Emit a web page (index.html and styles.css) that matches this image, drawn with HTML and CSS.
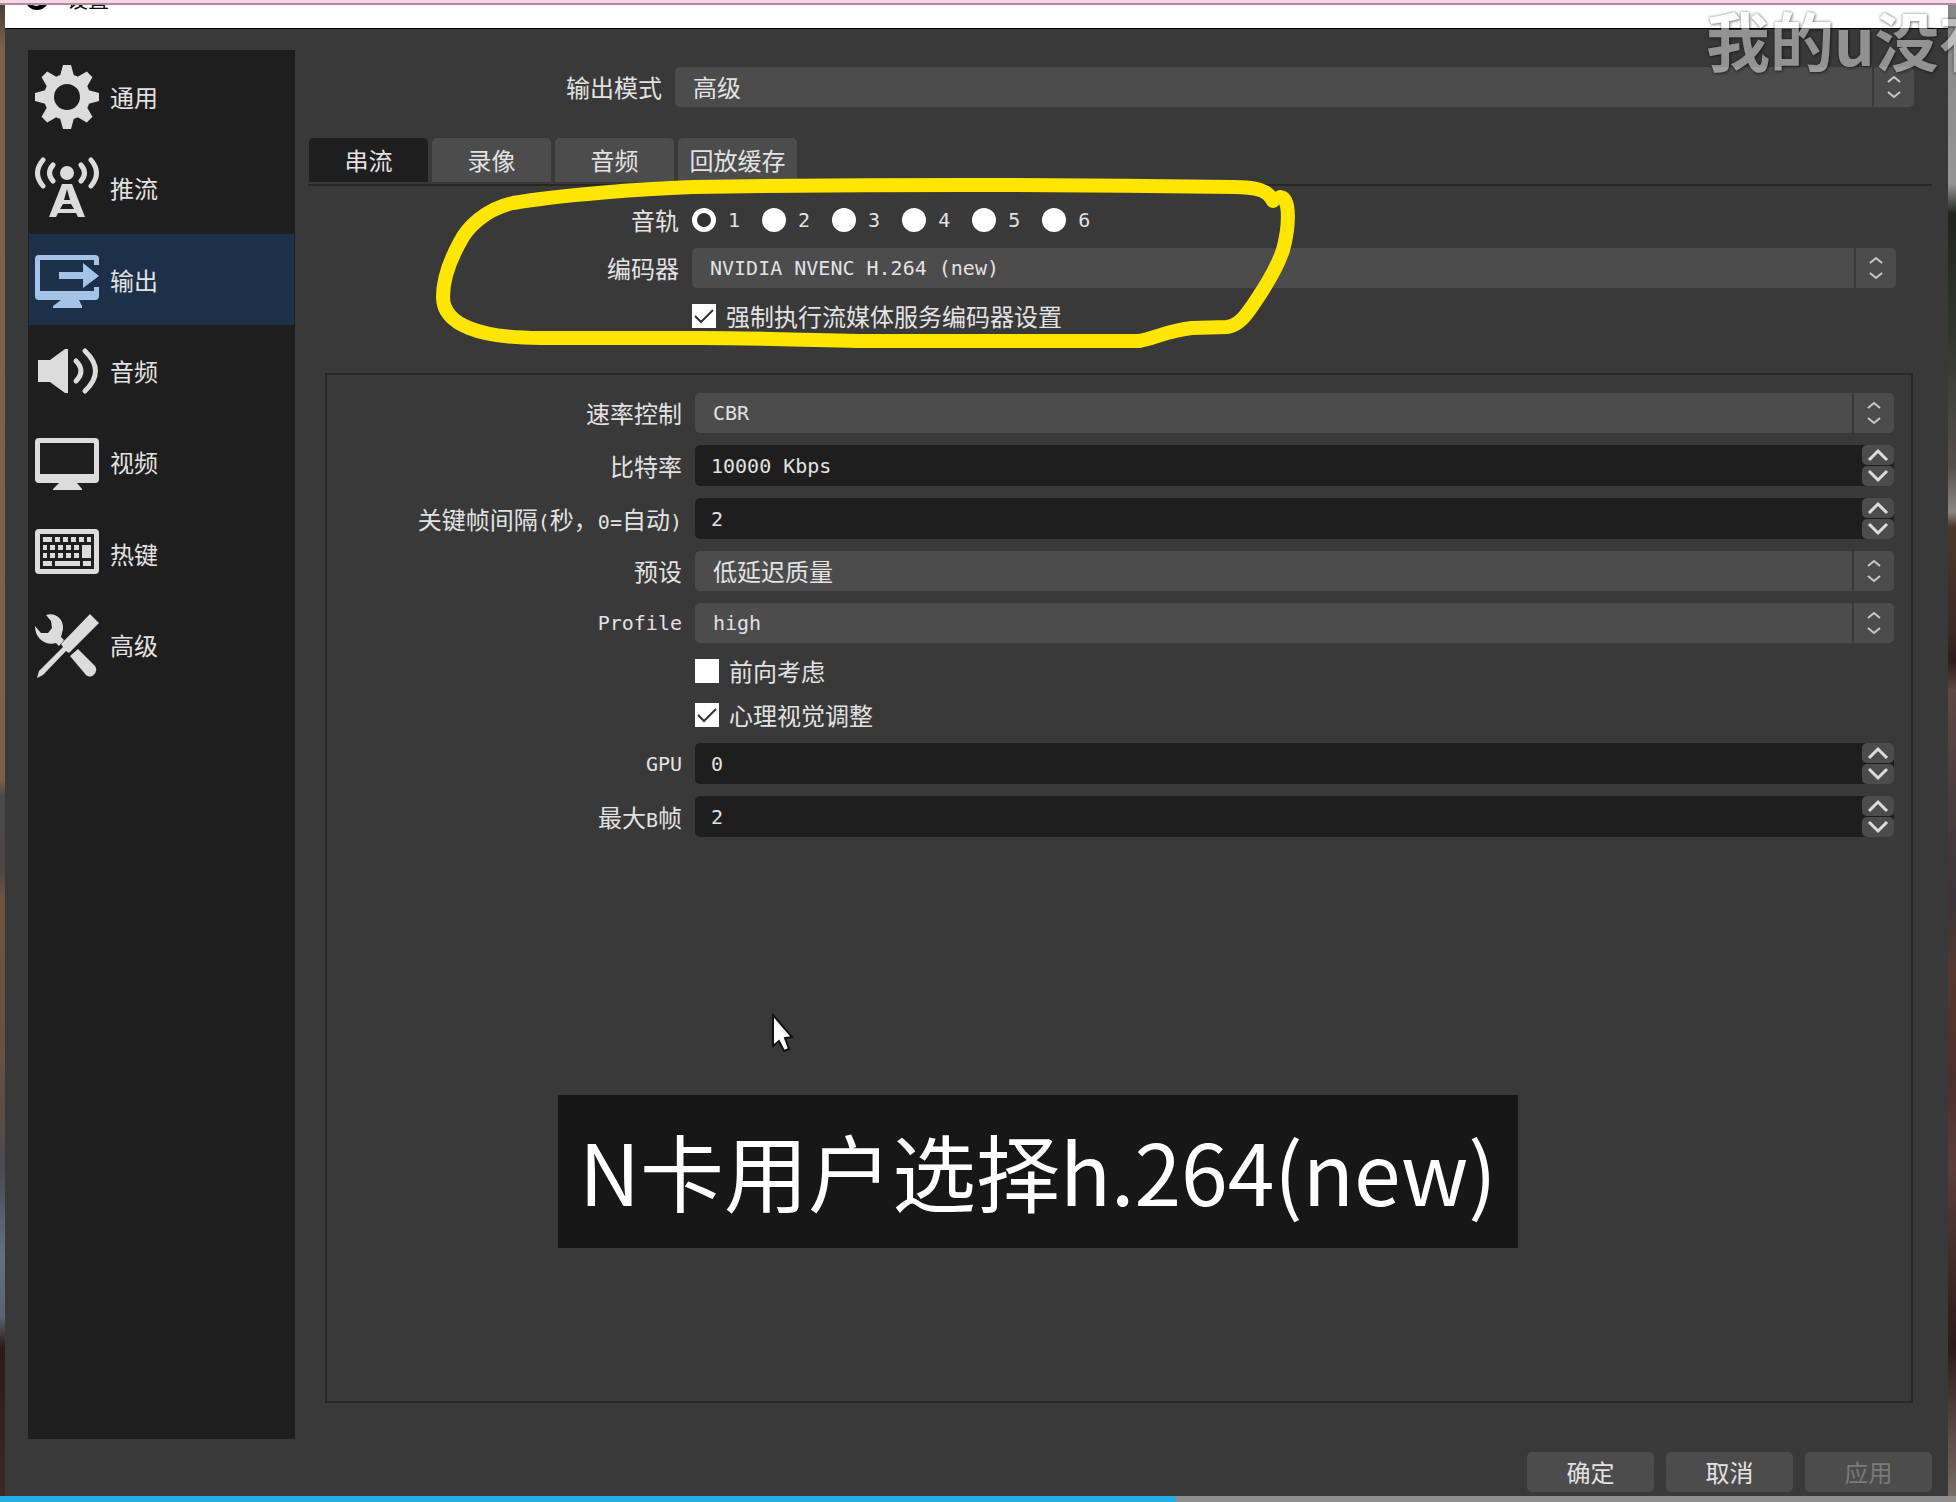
FILE: index.html
```html
<!DOCTYPE html>
<html lang="zh-CN">
<head>
<meta charset="utf-8">
<title>设置</title>
<link rel="stylesheet" href="styles.css">
</head>
<body>
<svg class="defs" aria-hidden="true">
  <symbol id="combo-arrows" viewBox="0 0 14 24"><path d="M1 7L7 2L13 7M1 17L7 22L13 17"/></symbol>
  <symbol id="up" viewBox="0 0 22 14"><path d="M2 12L11 3L20 12"/></symbol>
  <symbol id="down" viewBox="0 0 22 14"><path d="M2 2L11 11L20 2"/></symbol>
</svg>

<div class="top-strip"></div>
<div class="desktop">
  <div class="window">
    <header class="titlebar">
      <svg class="logo" viewBox="0 0 24 24"><circle cx="12" cy="12" r="12"/><path d="M7 17Q12 22 17 15" /></svg>
      <span class="title">设置</span>
      <svg class="close" viewBox="0 0 18 18"><path d="M1 1L17 17M17 1L1 17"/></svg>
    </header>

    <div class="content">
      <nav class="sidebar">
        <a href="#general" class="item">
          <svg viewBox="0 0 66 66"><g id="teeth"><path d="M29 1H37L40 12H26Z"/><path d="M29 1H37L40 12H26Z" transform="rotate(90 33 33)"/><path d="M29 1H37L40 12H26Z" transform="rotate(180 33 33)"/><path d="M29 1H37L40 12H26Z" transform="rotate(270 33 33)"/></g><use href="#teeth" transform="rotate(45 33 33)"/><circle class="gear-ring" cx="33" cy="33" r="18"/></svg>
          <span>通用</span></a>
        <a href="#stream" class="item">
          <svg viewBox="0 0 66 66"><circle cx="33" cy="18" r="7"/><path class="line" d="M9 5Q-2 18 9 31M19 10Q12 18 19 26M57 5Q68 18 57 31M47 10Q54 18 47 26"/><path fill-rule="evenodd" d="M28 29H38L51 62H44L42 58H24L22 62H15ZM33 34L30 45H36ZM29 49L26 54H40L37 49Z"/></svg>
          <span>推流</span></a>
        <a href="#output" class="item active" aria-current="page">
          <svg viewBox="0 0 66 66"><path d="M5 8H61Q65 8 65 12V18H60V13H6V44H60V40H65V49Q65 53 61 53H45L48 59V61H19V59L27 53H5Q1 53 1 49V12Q1 8 5 8Z"/><path d="M25 25H49V16L65 29L49 41V32H25Z"/></svg>
          <span>输出</span></a>
        <a href="#audio" class="item">
          <svg viewBox="0 0 66 66"><path d="M4 22H16L31 11H34V55H31L16 44H4Z"/><path class="line" d="M42 23Q52 33 42 43M51 13Q72 33 51 53"/></svg>
          <span>音频</span></a>
        <a href="#video" class="item">
          <svg viewBox="0 0 66 66"><path fill-rule="evenodd" d="M5 9H61Q65 9 65 13V50Q65 54 61 54H43L48 60V61H19V60L25 54H5Q1 54 1 50V13Q1 9 5 9ZM6 14V45H60V14Z"/></svg>
          <span>视频</span></a>
        <a href="#hotkeys" class="item">
          <svg viewBox="0 0 66 66"><path fill-rule="evenodd" d="M5 8H61Q65 8 65 12V49Q65 53 61 53H5Q1 53 1 49V12Q1 8 5 8ZM6 13V48H60V13Z"/><path d="M9 16h9v5h-9zM21 16h5v5h-5zM29 16h5v5h-5zM37 16h5v5h-5zM45 16h5v5h-5zM53 16h4v5h-4zM9 24h4v5h-4zM16 24h5v5h-5zM24 24h5v5h-5zM32 24h5v5h-5zM40 24h5v5h-5zM48 24h9v13h-9zM9 32h4v5h-4zM16 32h5v5h-5zM24 32h5v5h-5zM32 32h5v5h-5zM40 32h5v5h-5zM9 40h9v5h-9zM21 40h25v5h-25zM49 40h8v5h-8z"/></svg>
          <span>热键</span></a>
        <a href="#advanced" class="item">
          <svg viewBox="0 0 66 66"><path d="M12 3C20 0 30 6 29 17L27 25L30 28L25 34L22 31C12 34 1 27 1 14L7 21L14 21L18 16L17 9Z"/><path d="M36 44L44 37L61 54C65 59 58 68 52 63Z"/><path d="M56 2L65 11L35 41L32 39L9 63L3 66L5 59L29 35L27 32Z"/></svg>
          <span>高级</span></a>
      </nav>

      <main class="panel">
        <div class="form mode-form">
          <label for="mode">输出模式</label>
          <span class="combo"><select id="mode"><option>高级</option></select><svg><use href="#combo-arrows"/></svg></span>
        </div>

        <div class="tabs" role="tablist">
          <button type="button" role="tab" class="tab selected" aria-selected="true">串流</button>
          <button type="button" role="tab" class="tab">录像</button>
          <button type="button" role="tab" class="tab">音频</button>
          <button type="button" role="tab" class="tab">回放缓存</button>
        </div>

        <div class="form encoder-form">
          <span class="label" id="track-label">音轨</span>
          <div class="tracks latin" role="radiogroup" aria-labelledby="track-label">
            <label><input type="radio" name="track" checked>1</label>
            <label><input type="radio" name="track">2</label>
            <label><input type="radio" name="track">3</label>
            <label><input type="radio" name="track">4</label>
            <label><input type="radio" name="track">5</label>
            <label><input type="radio" name="track">6</label>
          </div>
          <label for="encoder">编码器</label>
          <span class="combo"><select id="encoder" class="latin"><option>NVIDIA NVENC H.264 (new)</option></select><svg><use href="#combo-arrows"/></svg></span>
          <label class="check"><input type="checkbox" checked>强制执行流媒体服务编码器设置</label>
        </div>

        <section class="group">
          <div class="form group-form">
            <label for="rate">速率控制</label>
            <span class="combo"><select id="rate" class="latin"><option>CBR</option></select><svg><use href="#combo-arrows"/></svg></span>

            <label for="bitrate">比特率</label>
            <span class="spin"><input id="bitrate" class="latin" type="text" value="10000 Kbps"><span class="steps"><button type="button" aria-label="+"><svg><use href="#up"/></svg></button><button type="button" aria-label="-"><svg><use href="#down"/></svg></button></span></span>

            <label for="keyint">关键帧间隔<span class="latin">(</span>秒&#xFF0C;<span class="latin">0=</span>自动<span class="latin">)</span></label>
            <span class="spin"><input id="keyint" class="latin" type="text" value="2"><span class="steps"><button type="button" aria-label="+"><svg><use href="#up"/></svg></button><button type="button" aria-label="-"><svg><use href="#down"/></svg></button></span></span>

            <label for="preset">预设</label>
            <span class="combo"><select id="preset"><option>低延迟质量</option></select><svg><use href="#combo-arrows"/></svg></span>

            <label for="profile" class="latin">Profile</label>
            <span class="combo"><select id="profile" class="latin"><option>high</option></select><svg><use href="#combo-arrows"/></svg></span>

            <label class="check"><input type="checkbox">前向考虑</label>
            <label class="check"><input type="checkbox" checked>心理视觉调整</label>

            <label for="gpu" class="latin">GPU</label>
            <span class="spin"><input id="gpu" class="latin" type="text" value="0"><span class="steps"><button type="button" aria-label="+"><svg><use href="#up"/></svg></button><button type="button" aria-label="-"><svg><use href="#down"/></svg></button></span></span>

            <label for="bframes">最大<span class="latin">B</span>帧</label>
            <span class="spin"><input id="bframes" class="latin" type="text" value="2"><span class="steps"><button type="button" aria-label="+"><svg><use href="#up"/></svg></button><button type="button" aria-label="-"><svg><use href="#down"/></svg></button></span></span>
          </div>
        </section>
      </main>
    </div>

    <footer class="actions">
      <button type="button">确定</button>
      <button type="button">取消</button>
      <button type="button" disabled>应用</button>
    </footer>
  </div>
</div>
<div class="progress"><div class="played" style="width:60.1%"></div></div>

<svg class="marker" viewBox="435 176 866 176"><path d="M1273 201C1268 190 1256 187 1233 187C1100 185 900 184 693 187C640 189 560 195 513 203C485 209 467 228 460 242C450 260 443 280 443 297C443 325 480 338 540 338H700C780 338 840 342 899 341H1139C1155 338 1170 330 1192 328L1227 327C1240 325 1246 315 1255 302C1270 280 1278 265 1283 250C1288 232 1292 198 1280 197"/></svg>
<svg class="cursor" viewBox="0 0 24 40"><path d="M2 2V33L8 28L13 38L18 36L14 25L21 24Z"/></svg>
<p class="caption">N卡用户选择h.264(new)</p>
<p class="danmaku">我的u没有</p>
</body>
</html>
```
FILE: styles.css
```css
* {
  box-sizing: border-box;
}

body {
  position: relative;
  display: flex;
  flex-direction: column;
  min-height: 100vh;
  margin: 0;
  overflow-x: hidden;
  background: #393939;
  color: #e2e2e2;
  font: 24px/24px "Noto Sans CJK SC", sans-serif;
}

button,
input,
select {
  margin: 0;
  border: 0;
  color: inherit;
  font: inherit;
}

p {
  margin: 0;
}

.defs {
  position: absolute;
  width: 0;
  height: 0;
}

.latin {
  font-family: "DejaVu Sans Mono", "Noto Sans CJK SC", monospace;
  font-size: 20px;
}

label > .latin {
  line-height: 0;
}

.top-strip {
  height: 5px;
  background: #fbd5e3;
  border-bottom: 2px solid #a8919b;
}

/* Strips of wallpaper show on both sides of the window */
.desktop {
  flex: 1;
  display: flex;
  padding: 0 8px 0 5px;
  background:
    linear-gradient(#4a3d38 0, #80624b 3%, #7d5f48 52%, #4b484c 53%, #4a4549 58%, #70543e 60%, #6a5140 70%, #4a4a50 78%, #667080 84%, #5b626c 88%, #271b1a 90%, #382a26 100%) left / 5px 100% no-repeat,
    linear-gradient(#858585 0, #969696 12%, #20241e 14%, #30362d 22%, #55504c 31%, #8b8784 34%, #4c3628 35%, #3a2a24 42%, #2a1d1c 44%, #604644 46%, #4c3e3f 52%, #3a3438 60%, #54382e 65%, #4a302a 72%, #5a3d38 78%, #2b1a19 90%, #786c66 100%) right / 8px 100% no-repeat;
}

.window {
  flex: 1;
  display: flex;
  flex-direction: column;
  background: #393939;
}

.titlebar {
  display: flex;
  align-items: flex-end;
  height: 24px;
  padding: 0 16px 18px 20px;
  overflow: hidden;
  background: #fff;
  border-bottom: 1px solid #000;
  color: #111;
  font-size: 21px;
  line-height: 24px;
}

.logo {
  flex: none;
  width: 24px;
  height: 24px;
  margin-right: 18px;
}

.logo path {
  fill: none;
  stroke: #ddd;
  stroke-width: 2;
}

.close {
  width: 18px;
  height: 18px;
  margin: 0 0 4px auto;
  fill: none;
  stroke: #876;
}

.content {
  flex: 1;
  display: grid;
  grid-template-columns: 267px 1fr;
  gap: 13px;
  padding: 21px 16px 0 23px;
}

.sidebar {
  display: grid;
  grid-template-rows: 91px 92px 91px 91px 92px 91px 91px;
  align-content: start;
  padding: 1px;
  background: #1e1e1e;
}

.item {
  display: flex;
  align-items: center;
  gap: 10px;
  padding-left: 5px;
  color: inherit;
  text-decoration: none;
}

.item svg {
  width: 66px;
  height: 66px;
  fill: #dcdcdc;
}

.item .line {
  fill: none;
  stroke: #dcdcdc;
  stroke-width: 5;
  stroke-linecap: round;
}

.item .gear-ring {
  fill: none;
  stroke: #dcdcdc;
  stroke-width: 10;
}

.active {
  background: #1c3049;
}

.active svg {
  fill: #a5c3e6;
}

.panel {
  display: flex;
  flex-direction: column;
  padding: 17px 0 36px;
}

.form {
  display: grid;
  column-gap: 13px;
  align-items: center;
}

.form > label,
.form > .label {
  text-align: right;
  white-space: nowrap;
}

.mode-form {
  grid-template-columns: 354px 1fr;
  padding-right: 18px;
}

.encoder-form {
  grid-template-columns: 371px 1fr;
  row-gap: 16px;
  padding: 22px 36px 0 0;
}

.group {
  flex: 1;
  margin: 45px 19px 0 17px;
  border: 2px solid #272727;
}

.group-form {
  grid-template-columns: 355px 1fr;
  row-gap: 12px;
  padding: 18px 17px 0 0;
}

.form > .check {
  grid-column: 2;
  display: flex;
  align-items: center;
  gap: 10px;
  text-align: left;
}

.group-form > .check {
  height: 32px;
}

.combo {
  display: grid;
  grid-template-columns: 1fr 42px;
  height: 40px;
}

.combo select {
  grid-area: 1 / 1 / 2 / 3;
  appearance: none;
  min-width: 0;
  height: 40px;
  padding: 0 50px 0 18px;
  border-radius: 5px;
  background: #4c4c4c;
}

.combo svg {
  grid-area: 1 / 2;
  width: 100%;
  height: 40px;
  padding: 8px 0;
  border-left: 2px solid #393939;
  fill: none;
  stroke: #c8c8c8;
  stroke-width: 2;
  pointer-events: none;
}

.spin {
  display: flex;
  height: 41px;
  border-radius: 5px;
  background: #1e1e1e;
}

.spin input {
  flex: 1;
  min-width: 0;
  padding: 0 16px;
  background: none;
}

.steps {
  display: flex;
  flex-direction: column;
  gap: 1px;
  width: 32px;
}

.steps button {
  flex: 1;
  display: flex;
  align-items: center;
  justify-content: center;
  padding: 0;
  border-radius: 5px;
  background: #4c4c4c;
}

.steps svg {
  width: 22px;
  height: 14px;
  fill: none;
  stroke: #dcdcdc;
  stroke-width: 3;
}

.tabs {
  display: flex;
  gap: 4px;
  margin-top: 31px;
  padding: 0 1px 2px;
  border-bottom: 2px solid #272727;
}

.tab {
  width: 119px;
  height: 44px;
  padding: 0;
  border-radius: 5px 5px 0 0;
  background: #4c4c4c;
}

.tab.selected {
  background: #1e1e1e;
}

.tracks {
  display: flex;
  gap: 22px;
}

.tracks label {
  display: flex;
  align-items: center;
  gap: 12px;
}

input[type="radio"],
input[type="checkbox"] {
  appearance: none;
  flex: none;
  width: 24px;
  height: 24px;
  background: #fff;
}

input[type="radio"] {
  border-radius: 50%;
}

input[type="radio"]:checked {
  border: 5px solid #fff;
  background: #303030;
}

input[type="checkbox"]:checked {
  background: #fff url("data:image/svg+xml,%3Csvg xmlns='http://www.w3.org/2000/svg' viewBox='0 0 24 24'%3E%3Cpath d='M3 12L9 18L21 6' fill='none' stroke='%23333' stroke-width='2'/%3E%3C/svg%3E") center / 24px no-repeat;
}

.actions {
  display: flex;
  justify-content: flex-end;
  gap: 12px;
  padding: 13px 16px 4px;
}

.actions button {
  width: 127px;
  height: 40px;
  padding: 0;
  border-radius: 5px;
  background: #4c4c4c;
}

.actions button:disabled {
  color: #7a7a7a;
}

.progress {
  height: 6px;
  background: #8f8f8f;
}

.played {
  height: 6px;
  background: #23ade5;
}

/* Overlays drawn over the recording */
.marker {
  position: absolute;
  left: 435px;
  top: 176px;
  width: 866px;
  height: 176px;
  fill: none;
  stroke: #ffe600;
  stroke-width: 14;
  stroke-linecap: round;
  stroke-linejoin: round;
  pointer-events: none;
}

.cursor {
  position: absolute;
  left: 771px;
  top: 1013px;
  width: 24px;
  height: 40px;
  fill: #fff;
  stroke: #111;
  stroke-width: 2;
}

.caption {
  position: absolute;
  left: 558px;
  top: 1095px;
  width: 960px;
  padding: 15px 0 18px;
  background: #171717;
  color: #fff;
  font-size: 84px;
  line-height: 120px;
  text-align: center;
  white-space: nowrap;
}

.danmaku {
  position: absolute;
  left: 1706px;
  right: 0;
  top: 0;
  overflow: hidden;
  color: #fff;
  font-size: 64px;
  font-weight: 700;
  line-height: 76px;
  white-space: nowrap;
  text-shadow: 0 0 3px #000, 1px 1px 3px #000;
  opacity: 0.45;
}
```
